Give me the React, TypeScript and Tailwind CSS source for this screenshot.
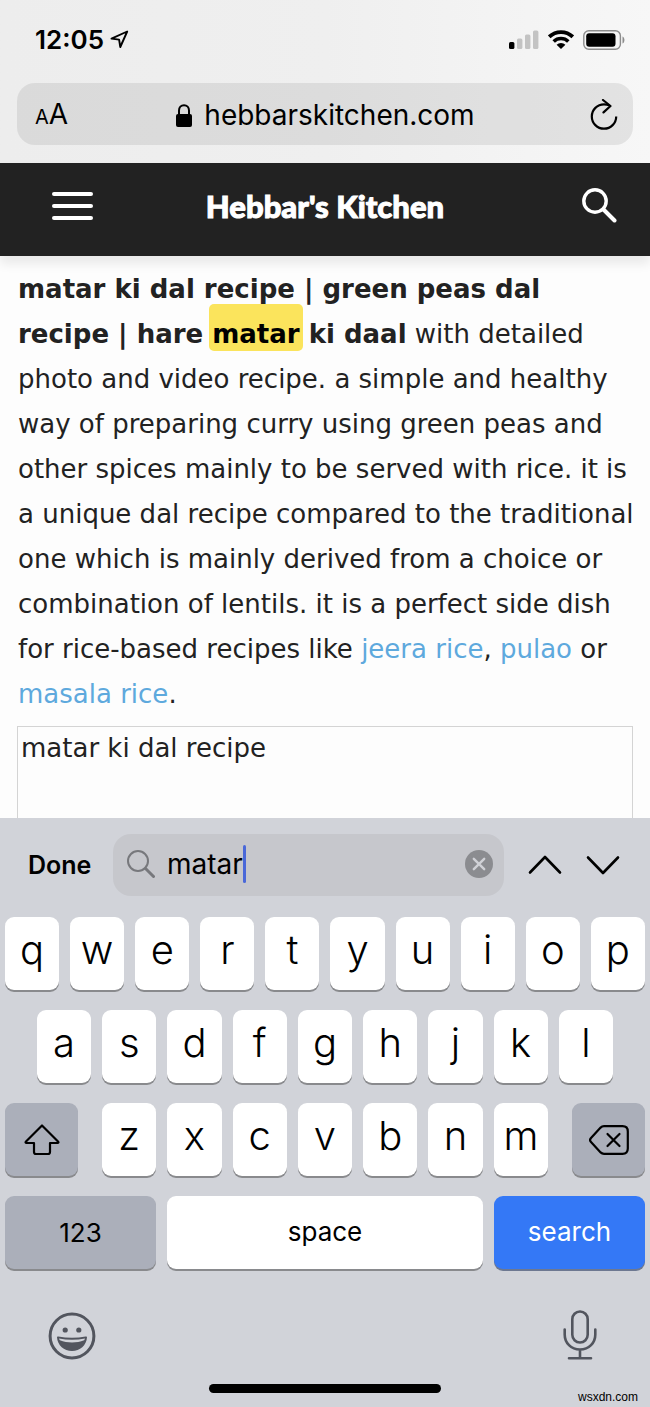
import { useState, type ReactNode } from "react";

const StatusBar = () => {
  return (
    <div className="flex h-[83px] items-center justify-between pl-[35px] pr-6 pb-1">
      <div className="flex items-center gap-1.5">
        <span className="text-[26px] leading-8 font-semibold">12:05</span>
        <svg width="19" height="19" viewBox="0 0 19 19" fill="none">
          <path
            d="M17.2 1.5 1.5 8.6l7.6 1L10.3 17z"
            stroke="currentColor"
            strokeWidth="1.9"
            strokeLinejoin="round"
          />
        </svg>
      </div>
      <div className="flex items-center gap-[9px]">
        <svg width="30" height="19" viewBox="0 0 30 19">
          <rect x="0" y="12" width="5.4" height="7" rx="1.5" />
          <rect x="8" y="8.5" width="5.4" height="10.5" rx="1.5" fill="#c3c3c3" />
          <rect x="16" y="4.5" width="5.4" height="14.5" rx="1.5" fill="#c3c3c3" />
          <rect x="24" y="0.5" width="5.4" height="18.5" rx="1.5" fill="#c3c3c3" />
        </svg>
        <svg width="26" height="19" viewBox="0 0 26 19" fill="none">
          <path d="M1.2 6.8a17 17 0 0 1 23.6 0" stroke="currentColor" strokeWidth="3.8" />
          <path d="M5.7 11.6a10.4 10.4 0 0 1 14.6 0" stroke="currentColor" strokeWidth="3.5" />
          <path d="M13 19 8.6 14.8a6.3 6.3 0 0 1 8.8 0z" fill="currentColor" />
        </svg>
        <svg width="43" height="20" viewBox="0 0 43 20" fill="none">
          <rect x="0.8" y="0.8" width="36.6" height="18.4" rx="5" stroke="#8c8c8c" strokeWidth="1.4" />
          <rect x="3.2" y="3.2" width="29.3" height="13.6" rx="3" fill="currentColor" />
          <path d="M39.5 6.5c2.6 1 2.6 6 0 7z" fill="#8c8c8c" />
        </svg>
      </div>
    </div>
  );
};

const AddressBar = () => {
  return (
    <div className="px-[17px] pb-[18px]">
      <div className="flex h-[62px] items-center justify-between rounded-[18px] bg-black/8 pl-[18px] pr-[15px] pt-0.5">
        <button aria-label="Text size" className="flex w-9 items-baseline">
          <span className="text-[20px] leading-8">A</span>
          <span className="text-[28px] leading-8">A</span>
        </button>
        <div className="flex items-center gap-3">
          <svg width="16" height="23" viewBox="0 0 16 23" fill="none">
            <rect x="0" y="10" width="16" height="13" rx="2" fill="currentColor" />
            <path d="M3 11V6.5C3 3.4 5 1.2 8 1.2s5 2.2 5 5.3V11" stroke="currentColor" strokeWidth="2" />
          </svg>
          <span className="text-[28px] leading-8">hebbarskitchen.com</span>
        </div>
        <button aria-label="Reload" className="flex w-[38px] justify-end">
          <svg width="28" height="32" viewBox="0 0 28 32" fill="none" stroke="currentColor" strokeWidth="2.2">
            <path d="M26.2 17.5A12.2 12.2 0 1 1 14 5.3c2.2 0 4 .4 5.5 1.2" />
            <path d="m13 1 7.5 6-7 6.4" strokeLinecap="round" strokeLinejoin="round" />
          </svg>
        </button>
      </div>
    </div>
  );
};

const SiteHeader = () => {
  return (
    <header className="grid h-[93px] grid-cols-[1fr_auto_1fr] items-center bg-[#222] px-[33px] pb-2 text-white shadow-[0_8px_10px_rgba(0,0,0,0.08)]">
      <button aria-label="Menu" className="ml-[19px] flex w-[41px] flex-col gap-2">
        <span className="h-1 rounded-full bg-white" />
        <span className="h-1 rounded-full bg-white" />
        <span className="h-1 rounded-full bg-white" />
      </button>
      <a
        href="#"
        className="font-['Lato',sans-serif] text-[31px] leading-9 font-black [-webkit-text-stroke:1px_white]"
      >
        Hebbar's Kitchen
      </a>
      <button aria-label="Search site" className="justify-self-end">
        <svg width="35" height="35" viewBox="0 0 35 35" fill="none" stroke="currentColor">
          <circle cx="13" cy="13" r="11.2" strokeWidth="3.4" />
          <path d="m21.5 21.5 11 11" strokeWidth="4" strokeLinecap="round" />
        </svg>
      </button>
    </header>
  );
};

const Article = () => {
  return (
    <article className="px-[17px] pt-[11px] font-['DejaVu_Sans',sans-serif] text-[26px] leading-[45px] text-[#222]">
      <p className="pl-px whitespace-nowrap">
        <strong>
          matar ki dal recipe | green peas dal
          <br />
          recipe | hare{" "}
          <mark className="-mx-[3px] rounded-[5px] bg-[#fbe45c] px-[3px] pt-[15px] pb-0.5 text-black">
            matar
          </mark>{" "}
          ki daal
        </strong>{" "}
        with detailed
        <br />
        photo and video recipe. a simple and healthy
        <br />
        way of preparing curry using green peas and
        <br />
        other spices mainly to be served with rice. it is
        <br />
        a unique dal recipe compared to the traditional
        <br />
        one which is mainly derived from a choice or
        <br />
        combination of lentils. it is a perfect side dish
        <br />
        for rice-based recipes like{" "}
        <a href="#" className="text-[#5ea9dd]">jeera rice</a>,{" "}
        <a href="#" className="text-[#5ea9dd]">pulao</a> or
        <br />
        <a href="#" className="text-[#5ea9dd]">masala rice</a>.
      </p>
      <div className="mt-[9px] h-[92px] border border-b-0 border-[#d4d4d4] px-[3px] leading-[43px]">
        matar ki dal recipe
      </div>
    </article>
  );
};

const FindBar = () => {
  const [query, setQuery] = useState("matar");

  return (
    <div className="flex items-center pt-4 pl-7 pr-[30px]">
      <button className="w-[85px] text-left text-[25px] leading-8 font-semibold">Done</button>
      <label className="flex h-[62px] min-w-0 flex-1 items-center rounded-[18px] bg-[#c6c7cc] pl-3.5 pr-[11px] pb-0.5">
        <svg width="28" height="28" viewBox="0 0 28 28" fill="none" stroke="#77787c" className="mr-3 shrink-0">
          <circle cx="11" cy="11" r="10" strokeWidth="2" />
          <path d="m18.5 18.5 8 8" strokeWidth="3" strokeLinecap="round" />
        </svg>
        <input
          aria-label="Find on page"
          value={query}
          onChange={(e) => setQuery(e.target.value)}
          className="[field-sizing:content] bg-transparent text-[28px] leading-8 outline-none"
        />
        <span className="h-[38px] w-[3px] rounded-full bg-[#4a68d9]" />
        <button aria-label="Clear" onClick={() => setQuery("")} className="ml-auto">
          <svg width="28" height="28" viewBox="0 0 28 28">
            <circle cx="14" cy="14" r="14" fill="#8b8c90" />
            <path d="m8.8 8.8 10.4 10.4M19.2 8.8 8.8 19.2" stroke="#d0d1d6" strokeWidth="2.4" strokeLinecap="round" />
          </svg>
        </button>
      </label>
      <div className="ml-6 flex gap-6">
        <button aria-label="Previous match">
          <svg width="34" height="20" viewBox="0 0 34 20" fill="none">
            <path d="m2 17.5 15-15.5L32 17.5" stroke="currentColor" strokeWidth="2.6" strokeLinecap="round" strokeLinejoin="round" />
          </svg>
        </button>
        <button aria-label="Next match">
          <svg width="34" height="20" viewBox="0 0 34 20" fill="none">
            <path d="m2 2.5 15 15.5L32 2.5" stroke="currentColor" strokeWidth="2.6" strokeLinecap="round" strokeLinejoin="round" />
          </svg>
        </button>
      </div>
    </div>
  );
};

const LetterKey = ({ letter }: { letter: string }) => {
  return (
    <button className="h-[73px] min-w-0 flex-1 rounded-[9px] bg-white pb-2 text-[40px] leading-10 font-light shadow-[0_2px_0_#898a8d]">
      {letter}
    </button>
  );
};

const IconKey = ({ label, children }: { label: string; children: ReactNode }) => {
  return (
    <button
      aria-label={label}
      className="flex h-[73px] w-[73px] shrink-0 items-center justify-center rounded-[9px] bg-[#abafba] shadow-[0_2px_0_#898a8d]"
    >
      {children}
    </button>
  );
};

const Keyboard = () => {
  return (
    <div className="mt-[21px] flex flex-col gap-5 px-[5px]">
      <div className="flex gap-[11px]">
        {"qwertyuiop".split("").map((letter) => (
          <LetterKey key={letter} letter={letter} />
        ))}
      </div>
      <div className="flex gap-[11px] px-8">
        {"asdfghjkl".split("").map((letter) => (
          <LetterKey key={letter} letter={letter} />
        ))}
      </div>
      <div className="flex gap-6">
        <IconKey label="Shift">
          <svg width="36" height="32" viewBox="0 0 36 32" fill="none">
            <path
              d="M18 1.5 2 17.5c-.8.8-.4 1.5.5 1.5H10v9c0 1.4.6 2 2 2h12c1.4 0 2-.6 2-2v-9h7.5c.9 0 1.3-.7.5-1.5z"
              stroke="currentColor"
              strokeWidth="2.2"
              strokeLinejoin="round"
            />
          </svg>
        </IconKey>
        <div className="flex min-w-0 flex-1 gap-[11px]">
          {"zxcvbnm".split("").map((letter) => (
            <LetterKey key={letter} letter={letter} />
          ))}
        </div>
        <IconKey label="Delete">
          <svg width="40" height="30" viewBox="0 0 40 30" fill="none" stroke="currentColor" strokeWidth="2.2">
            <path d="M15 1.2h18.5c3.5 0 5.3 1.8 5.3 5.3v17c0 3.5-1.8 5.3-5.3 5.3H15c-1.5 0-2.4-.4-3.4-1.4L2 17c-1.3-1.4-1.3-2.6 0-4l9.600-10.400c1-1 1.900-1.400 3.400-1.400z" />
            <path d="m18.5 9 12 12M30.5 9l-12 12" strokeLinecap="round" />
          </svg>
        </IconKey>
      </div>
      <div className="flex gap-[11px] text-[26px] leading-8">
        <button className="h-[73px] w-[151px] rounded-[9px] bg-[#abafba] shadow-[0_2px_0_#898a8d]">
          123
        </button>
        <button className="h-[73px] flex-1 rounded-[9px] bg-white pb-0.5 shadow-[0_2px_0_#898a8d]">
          space
        </button>
        <button className="h-[73px] w-[151px] rounded-[9px] bg-[#3478f6] pb-0.5 text-white shadow-[0_2px_0_#6d7891]">
          search
        </button>
      </div>
    </div>
  );
};

const BottomBar = () => {
  return (
    <div className="relative flex flex-col pt-[41px] pb-3.5">
      <div className="flex items-end justify-between pl-12 pr-[53px] text-[#52555e]">
        <button aria-label="Emoji">
          <svg width="48" height="48" viewBox="0 0 48 48" fill="none">
            <circle cx="24" cy="24" r="21.9" stroke="currentColor" strokeWidth="3" />
            <circle cx="17.2" cy="18" r="2.6" fill="currentColor" />
            <circle cx="30.8" cy="18" r="2.6" fill="currentColor" />
            <path
              d="M9 25.3c0-.8.6-1 1.3-.9 9 1.800 18.400 1.800 27.400 0 .7-.1 1.300.1 1.300.9C38.500 33.500 32 39 24 39S9.500 33.500 9 25.300z"
              fill="currentColor"
            />
            <path d="M11 26.500c8.500 1.700 17.500 1.700 26 0-.2.600-.5 1.200-.9 1.800-7.500 2.900-16.700 2.900-24.200 0-.4-.6-.7-1.200-.9-1.800z" fill="#d1d3d9" />
          </svg>
        </button>
        <button aria-label="Dictate">
          <svg width="34" height="50" viewBox="0 0 34 50" fill="none" stroke="currentColor" strokeWidth="2.6" strokeLinecap="round">
            <rect x="9.3" y="1.5" width="15.4" height="31" rx="7.7" />
            <path d="M1.7 19.500v5C1.700 33 8 39.500 17 39.500S32.300 33 32.300 24.500v-5M17 39.500v8.500M6 48.300h22" />
          </svg>
        </button>
      </div>
      <div className="mt-6 h-[9px] w-[232px] self-center rounded-full bg-black" />
      <span className="absolute right-3 bottom-0 font-['Liberation_Sans',sans-serif] text-[12px] leading-5">
        wsxdn.com
      </span>
    </div>
  );
};

const App = () => {
  return (
    <main className="w-full overflow-hidden bg-[#fdfdfd] font-['Inter',sans-serif] text-black">
      <div className="bg-linear-to-r from-[#ededed] via-[#efefef] to-[#f7f7f7]">
        <StatusBar />
        <AddressBar />
      </div>
      <SiteHeader />
      <Article />
      <section className="bg-[#d1d3d9]">
        <FindBar />
        <Keyboard />
        <BottomBar />
      </section>
    </main>
  );
};

export default App;
